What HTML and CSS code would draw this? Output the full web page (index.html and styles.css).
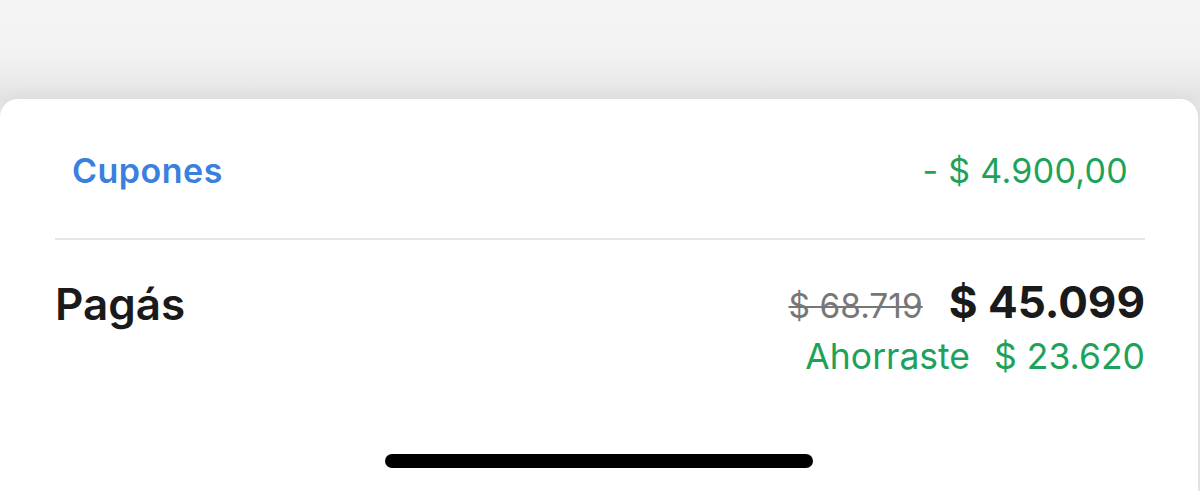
FILE: index.html
```html
<!DOCTYPE html>
<html lang="es">
<head>
  <meta charset="UTF-8">
  <title>Resumen de pago</title>
  <link rel="stylesheet" href="styles.css">
</head>
<body>

  <div class="backdrop"></div>

  <div class="sheet">
    <div class="coupon-row">
      <span class="coupon-label">Cupones</span>
      <span class="coupon-amount">- $ 4.900,00</span>
    </div>

    <div class="divider"></div>

    <div class="total-row">
      <span class="total-label">Pagás</span>
      <div class="total-prices">
        <div class="price-line">
          <span class="old-price">$ 68.719</span>
          <span class="new-price">$ 45.099</span>
        </div>
        <div class="savings">
          <span>Ahorraste</span>
          <span>$ 23.620</span>
        </div>
      </div>
    </div>

    <div class="home-bar"></div>
  </div>

</body>
</html>
```

FILE: styles.css
```css
body {
  margin: 0;
  height: 491px;
  overflow: hidden;
  font-family: 'Inter', 'Lato', sans-serif;
  background: #e6e6e6;
  display: flex;
  flex-direction: column;
}
.backdrop {
  height: 100px;
  flex-shrink: 0;
  background: linear-gradient(#f5f5f5 0%, #f2f2f2 55%, #e4e4e4 100%);
}
.sheet {
  flex: 1;
  margin-right: 2px;
  margin-top: -1px;
  background: #fff;
  border-radius: 18px 18px 0 0;
  box-shadow: 0 -2px 20px rgba(0,0,0,0.05);
  display: flex;
  flex-direction: column;
}
.coupon-row {
  height: 139px;
  padding: 3px 70px 0 72px;
  display: flex;
  justify-content: space-between;
  align-items: center;
  box-sizing: border-box;
}
.coupon-label {
  color: #3a80df;
  font-size: 34px;
  font-weight: 600;
  letter-spacing: 0.5px;
}
.coupon-amount {
  color: #1ea25a;
  font-size: 34px;
  letter-spacing: 0.3px;
}
.divider {
  height: 2px;
  margin: 0 53px 0 55px;
  background: #e6e6e6;
}
.total-row {
  padding: 37px 53px 0 55px;
  display: flex;
  justify-content: space-between;
  align-items: flex-start;
}
.total-label {
  color: #1a1a1a;
  font-size: 44px;
  font-weight: 600;
  line-height: 54px;
}
.total-prices {
  display: flex;
  flex-direction: column;
  align-items: flex-end;
}
.price-line {
  display: flex;
  align-items: baseline;
  gap: 26px;
  line-height: 50px;
}
.old-price {
  color: #777;
  font-size: 33.5px;
  text-decoration: line-through;
  text-decoration-thickness: 2px;
}
.new-price {
  color: #1a1a1a;
  font-size: 44px;
  font-weight: 700;
}
.savings {
  display: flex;
  gap: 24px;
  color: #1ea25a;
  font-size: 35.5px;
  line-height: 52px;
}
.home-bar {
  width: 428px;
  height: 14px;
  border-radius: 7px;
  background: #000;
  margin: 71px auto 0;
}
```
